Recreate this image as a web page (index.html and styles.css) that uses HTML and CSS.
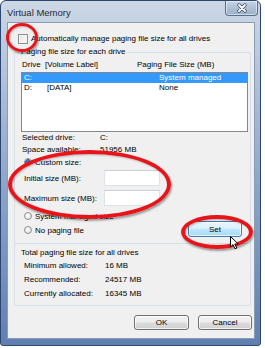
FILE: index.html
```html
<!DOCTYPE html>
<html>
<head>
<meta charset="utf-8">
<link rel="stylesheet" href="styles.css">
</head>
<body>
<div class="win">
  <div class="titlebar">
    <span class="title">Virtual Memory</span>
    <div class="close">
      <svg width="12" height="10" viewBox="0 0 12 10"><path d="M3 2 L9 8 M9 2 L3 8" stroke="#3a4a60" stroke-width="3.2" stroke-linecap="round"/><path d="M3 2 L9 8 M9 2 L3 8" stroke="#ffffff" stroke-width="1.8" stroke-linecap="round"/></svg>
    </div>
  </div>
  <div class="client">
    <div class="chk-row"><span class="chk"></span><span>Automatically manage paging file size for all drives</span></div>
    <fieldset class="grp">
      <legend>Paging file size for each drive</legend>
      <div class="hdr"><span class="h1">Drive&nbsp; [Volume Label]</span><span>Paging File Size (MB)</span></div>
      <div class="list">
        <div class="item sel"><span class="c1">C:</span><span>System managed</span></div>
        <div class="item"><span class="c1"><span class="dl">D:</span>[DATA]</span><span>None</span></div>
      </div>
      <div class="kv"><span class="k">Selected drive:</span><span>C:</span></div>
      <div class="kv"><span class="k">Space available:</span><span>51956 MB</span></div>
      <div class="radio-row custom"><span class="radio on"></span><span>Custom size:</span></div>
      <div class="field-row first"><span class="fk">Initial size (MB):</span><span class="input"></span></div>
      <div class="field-row"><span class="fk">Maximum size (MB):</span><span class="input"></span></div>
      <div class="bottom-row">
        <div class="radios">
          <div class="radio-row"><span class="radio"></span><span>System managed size</span></div>
          <div class="radio-row"><span class="radio"></span><span>No paging file</span></div>
        </div>
        <div class="btn set">Set</div>
      </div>
      <div class="sep"></div>
      <div class="legend2">Total paging file size for all drives</div>
      <div class="tot first"><span class="tk">Minimum allowed:</span><span>16 MB</span></div>
      <div class="tot"><span class="tk">Recommended:</span><span>24517 MB</span></div>
      <div class="tot"><span class="tk">Currently allocated:</span><span>16345 MB</span></div>
    </fieldset>
    <div class="buttons">
      <div class="btn ok">OK</div>
      <div class="btn cancel">Cancel</div>
    </div>
  </div>
  <div class="ring ring1"></div>
  <div class="ring ring2"></div>
  <div class="ring ring3"></div>
  <svg class="cursor" width="10" height="14" viewBox="0 0 10 14"><path d="M0.5 0.5 L0.5 11 L3 8.6 L5 12.8 L6.8 12 L4.8 8 L8.2 8 Z" fill="#ffffff" stroke="#000000" stroke-width="1" stroke-linejoin="round"/></svg>
</div>
</body>
</html>
```
FILE: styles.css
```css
html, body {
  margin: 0;
  padding: 0;
  background: #ffffff;
}
body {
  font-family: "Liberation Sans", Arial, sans-serif;
  font-size: 8px;
  color: #000;
}
.win {
  position: relative;
  width: 261px;
  height: 346px;
  box-sizing: border-box;
  border: 1px solid #2c4670;
  border-radius: 6px 6px 3px 3px;
  background: linear-gradient(180deg, #cdd8e6 0%, #b4c4da 20%, #8aa4c8 55%, #5f80b0 100%);
  padding: 0 5px 6px 6px;
  display: flex;
  flex-direction: column;
}
.titlebar {
  height: 21px;
  display: flex;
  align-items: flex-start;
  position: relative;
}
.title {
  font-size: 9.5px;
  margin-top: 6px;
  color: #1e2a3a;
}
.close {
  position: absolute;
  right: -3px;
  top: 0;
  width: 33px;
  height: 15px;
  box-sizing: border-box;
  border: 1px solid #5a6e8c;
  border-top: none;
  border-radius: 0 0 4px 4px;
  background: linear-gradient(180deg, #c8d4e4 0%, #aebfd5 50%, #9cb0cc 100%);
  box-shadow: inset 0 0 0 1px rgba(255,255,255,0.5);
  display: flex;
  align-items: center;
  justify-content: center;
}
.client {
  flex: 1;
  background: #f0f0f0;
  border: 1px solid #8b9bb3;
  display: flex;
  flex-direction: column;
  padding: 10px 2px 0 10px;
}
.chk-row {
  height: 11px;
  display: flex;
  align-items: center;
}
.chk {
  width: 10px;
  height: 10px;
  box-sizing: border-box;
  border: 1px solid #8f8f8f;
  background: linear-gradient(135deg, #e4e4e4, #fbfbfb);
  box-shadow: inset 0 0 0 1px #f4f4f4;
  margin-right: 3px;
}
.grp {
  margin: 3px 1px 0 -4px;
  padding: 0 2px 4px 7px;
  border: 1px solid #d5dfe5;
  border-radius: 2px;
  min-width: 0;
}
.grp legend {
  padding: 0 1px;
  margin-left: -2px;
  line-height: 10px;
  height: 10px;
}
.hdr {
  margin-top: 3px;
  height: 10px;
  line-height: 10px;
  display: flex;
}
.h1 {
  width: 115px;
}
.list {
  margin: 2px 0 0 -1px;
  height: 60px;
  box-sizing: border-box;
  border: 1px solid #828790;
  background: #fff;
  padding-top: 0;
}
.item {
  height: 10px;
  line-height: 10px;
  display: flex;
  padding-left: 2px;
}
.item.sel {
  background: #3399ff;
  color: #fff;
}
.c1 {
  width: 135px;
}
.dl {
  display: inline-block;
  width: 23px;
}
.kv {
  height: 12px;
  line-height: 12px;
  display: flex;
}
.kv:first-of-type {
  margin-top: 2px;
}
.k {
  width: 78px;
}
.radio-row {
  height: 12px;
  display: flex;
  align-items: center;
  padding-left: 2px;
}
.radio {
  width: 8px;
  height: 8px;
  box-sizing: border-box;
  border-radius: 50%;
  border: 1px solid #8e8f8f;
  background: radial-gradient(circle at 40% 40%, #ffffff, #d8d8d8);
  margin-right: 3px;
  position: relative;
}
.radio.on {
  background: radial-gradient(circle, #2a7dd0 0 2px, #0f4c8c 2.5px, #e8e8e8 3px);
}
.field-row {
  display: flex;
  align-items: center;
  height: 16px;
  margin-top: 4px;
  padding-left: 2px;
}
.field-row.first {
  margin-top: 2px;
}
.fk {
  width: 80px;
}
.input {
  width: 56px;
  height: 16px;
  box-sizing: border-box;
  border: 1px solid #dfe3e8;
  border-top-color: #c9ced6;
  background: #fff;
}
.bottom-row {
  display: flex;
  align-items: flex-end;
  margin-top: 4px;
}
.radios {
  display: flex;
  flex-direction: column;
  gap: 2px;
}
.btn {
  box-sizing: border-box;
  border: 1px solid #707070;
  border-radius: 3px;
  background: linear-gradient(180deg, #f4f4f4 0%, #ebebeb 48%, #dddddd 52%, #cfcfcf 100%);
  box-shadow: inset 0 0 0 1px rgba(255,255,255,0.7);
  display: flex;
  align-items: center;
  justify-content: center;
}
.set {
  width: 54px;
  height: 16px;
  margin-left: auto;
  margin-right: 6px;
  margin-bottom: -1px;
  border-color: #3c7fb1;
  background: linear-gradient(180deg, #eaf6fd 0%, #d9f0fc 48%, #bee6fd 52%, #a7d9f5 100%);
}
.sep {
  height: 1px;
  background: #d5dfe5;
  margin: 7px -2px 0 -7px;
}
.legend2 {
  margin-top: 4px;
  height: 10px;
  line-height: 10px;
  margin-left: -1px;
}
.tot {
  height: 14px;
  line-height: 14px;
  display: flex;
  padding-left: 2px;
}
.tot.first {
  margin-top: 1px;
}
.tot + .tot {
  margin-top: 0;
}
.tk {
  width: 81px;
}
.buttons {
  display: flex;
  justify-content: flex-end;
  gap: 9px;
  margin-top: 9px;
}
.ok {
  width: 55px;
  height: 15px;
}
.cancel {
  width: 54px;
  height: 15px;
}
.ring {
  position: absolute;
  border: 4px solid #e8141a;
  border-radius: 50%;
  box-shadow: 1px 2px 2px rgba(0,0,0,0.35), inset 1px 1px 2px rgba(0,0,0,0.25);
  box-sizing: border-box;
}
.ring1 {
  left: 5px;
  top: 22px;
  width: 32px;
  height: 29px;
  border-width: 3px;
}
.ring2 {
  left: 7px;
  top: 149px;
  width: 163px;
  height: 69px;
}
.ring3 {
  left: 180px;
  top: 214px;
  width: 72px;
  height: 34px;
}
.cursor {
  position: absolute;
  left: 229px;
  top: 235px;
}
```
